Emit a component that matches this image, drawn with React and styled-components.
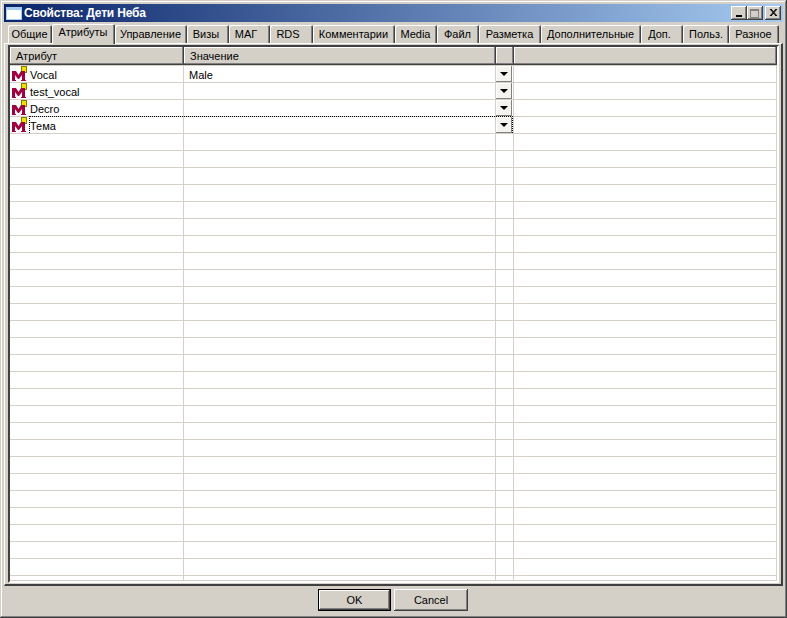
import styled, { createGlobalStyle } from "styled-components"

const Global = createGlobalStyle`
    html, body {
        margin: 0;
        padding: 0;
        background: #d4d0c8;
    }
    * {
        box-sizing: border-box;
    }
`

const Window = styled.div`
    width: 787px;
    height: 618px;
    background: #d4d0c8;
    padding: 4px 4px 2px 4px;
    display: flex;
    flex-direction: column;
    overflow: hidden;
    font-family: "Liberation Sans", Arial, sans-serif;
    font-size: 11px;
    color: #000;
    box-shadow: inset -1px -1px 0 #404040, inset 1px 1px 0 #d4d0c8, inset -2px -2px 0 #808080, inset 2px 2px 0 #fff;
`

const TitleBar = styled.div`
    height: 18px;
    flex: none;
    display: flex;
    align-items: center;
    padding: 0 2px;
    background: linear-gradient(to right, #0a246a, #a6caf0);
`

const TitleIcon = styled.div`
    width: 16px;
    height: 13px;
    background: #fff;
    border: 1px solid #a6caf0;
    border-top: 3px solid #a6caf0;
    margin-right: 2px;
`

const TitleText = styled.div`
    flex: 1;
    color: #fff;
    font-family: "Liberation Sans", sans-serif;
    font-size: 12px;
    font-weight: bold;
    letter-spacing: -0.2px;
    white-space: nowrap;
`

const CaptionButton = styled.div`
    width: 16px;
    height: 14px;
    margin-left: ${p => p.$gap || 0}px;
    background: #d4d0c8;
    box-shadow: inset -1px -1px 0 #404040, inset 1px 1px 0 #fff, inset -2px -2px 0 #808080;
    display: flex;
    align-items: center;
    justify-content: center;
`

const TabStrip = styled.div`
    height: 21px;
    flex: none;
    display: flex;
    align-items: flex-end;
    padding-left: 4px;
`

const Tab = styled.div`
    width: ${p => p.$w}px;
    height: ${p => (p.$active ? 20 : 18)}px;
    margin-bottom: ${p => (p.$active ? -1 : 0)}px;
    background: #d4d0c8;
    border-top-left-radius: 2px;
    border-top-right-radius: 2px;
    box-shadow: inset 1px 1px 0 #fff, inset -1px 0 0 #404040, inset -2px 0 0 #808080;
    text-align: center;
    padding-right: ${p => p.$shift ?? 1}px;
    line-height: ${p => (p.$active ? 17 : 19)}px;
    white-space: nowrap;
    position: relative;
    z-index: ${p => (p.$active ? 2 : 1)};
`

const Panel = styled.div`
    height: 543px;
    flex: none;
    border-left: 1px solid #fff;
    border-top: 1px solid #fff;
    border-right: 2px solid #404040;
    border-bottom: 2px solid #404040;
    padding: 1px 2px 1px 3px;
`

const Grid = styled.div`
    height: 538px;
    background: #fff;
    border-left: 2px solid #404040;
    border-top: 2px solid #404040;
    border-right: 2px solid #fff;
    border-bottom: 2px solid #fff;
    box-shadow: inset -1px -1px 0 #d4d0c8;
    overflow: hidden;
    position: relative;
`

const HeaderRow = styled.div`
    display: grid;
    grid-template-columns: 174px 312px 18px 1fr;
    height: 17px;
    margin-bottom: 1px;
`

const HeaderCell = styled.div`
    background: #d4d0c8;
    box-shadow: inset -1px -1px 0 #404040, inset -2px -2px 0 #808080, inset 1px 1px 0 #fff;
    padding-left: 6px;
    line-height: 18px;
    white-space: nowrap;
`

const Row = styled.div`
    display: grid;
    grid-template-columns: 174px 312px 18px 1fr;
    height: 17px;
    border-top: 1px solid #d4d0c8;
`

const Cell = styled.div`
    border-right: 1px solid #d4d0c8;
    display: flex;
    align-items: center;
    padding-left: ${p => p.$pad || 0}px;
    white-space: nowrap;
    position: relative;
    min-width: 0;
`

const CellText = styled.span`
    position: relative;
    top: 1px;
    margin-left: ${p => p.$gap || 0}px;
`

const ArrowButton = styled.div`
    width: 16px;
    height: 16px;
    background: #f4f3f0;
    box-shadow: inset -1px -1px 0 #808080, inset 1px 1px 0 #fff;
    display: flex;
    align-items: center;
    justify-content: center;
`

const Arrow = styled.div`
    width: 0;
    height: 0;
    border-left: 4px solid transparent;
    border-right: 4px solid transparent;
    border-top: 4px solid #000;
`

const FocusLine = styled.div`
    position: absolute;
    left: 19px;
    top: 69px;
    width: 484px;
    height: 17px;
    border: 1px dotted #000;
    border-bottom: none;
    pointer-events: none;
`

const ButtonBar = styled.div`
    flex: 1;
    display: flex;
    justify-content: center;
    align-items: flex-start;
    gap: 3px;
    padding: 3px 1px 0 0;
`

const DialogButton = styled.div`
    width: ${p => (p.$default ? 73 : 74)}px;
    height: 22px;
    background: #d4d0c8;
    text-align: center;
    line-height: 22px;
    box-shadow: ${p => p.$default
        ? "inset 0 0 0 1px #000, inset -2px -2px 0 #404040, inset 2px 2px 0 #fff, inset -3px -3px 0 #808080"
        : "inset -1px -1px 0 #404040, inset 1px 1px 0 #fff, inset -2px -2px 0 #808080"};
`

const MIcon = () => (
    <svg width="18" height="16" viewBox="0 0 18 16" style={{ flex: "none" }}>
        <rect x="10.5" y="0.5" width="5" height="6" fill="#f0e000" stroke="#808000" />
        <path d="M1 5h4l2.5 4L10 5h4v9h1v1h-5v-1h1V9l-3 4H7L4 9v5h1v1H1v-1h0z" fill="#a00040" />
    </svg>
)

const tabs = [
    ["Общие", 44], ["Атрибуты", 63], ["Управление", 72], ["Визы", 42, 4], ["МАГ", 41, 7], ["RDS", 43, 7],
    ["Комментарии", 82], ["Media", 42], ["Файл", 42], ["Разметка", 62], ["Дополнительные", 100],
    ["Доп.", 42, 5], ["Польз.", 46, 0], ["Разное", 50],
]

const attrs = ["Vocal", "test_vocal", "Decro", "Тема"]
const emptyRows = Array.from({ length: 28 })

const App = () => {
    return (
        <Window>
            <Global />
            <TitleBar>
                <TitleIcon />
                <TitleText>Свойства: Дети Неба</TitleText>
                <CaptionButton>
                    <svg width="8" height="8"><rect x="1" y="6" width="6" height="2" fill="#000" /></svg>
                </CaptionButton>
                <CaptionButton>
                    <svg width="10" height="9"><rect x="0.5" y="0.5" width="8" height="8" fill="none" stroke="#808080" /><rect x="0" y="0" width="9" height="2" fill="#808080" /></svg>
                </CaptionButton>
                <CaptionButton $gap={2}>
                    <svg width="9" height="8"><path d="M1 0l6 7M2 0l6 7M7 0L1 7M8 0L2 7" stroke="#000" fill="none" /></svg>
                </CaptionButton>
            </TitleBar>
            <TabStrip>
                {tabs.map(([label, w, shift]) => (
                    <Tab key={label} $w={w} $shift={shift} $active={label === "Атрибуты"}>{label}</Tab>
                ))}
            </TabStrip>
            <Panel>
                <Grid>
                    <HeaderRow>
                        <HeaderCell>Атрибут</HeaderCell>
                        <HeaderCell>Значение</HeaderCell>
                        <HeaderCell />
                        <HeaderCell />
                    </HeaderRow>
                    {attrs.map((name, i) => (
                        <Row key={name}>
                            <Cell $pad={1}><MIcon /><CellText $gap={1}>{name}</CellText></Cell>
                            <Cell $pad={5}>{i === 0 ? <CellText>Male</CellText> : null}</Cell>
                            <Cell><ArrowButton><Arrow /></ArrowButton></Cell>
                            <Cell />
                        </Row>
                    ))}
                    {emptyRows.map((_, i) => (
                        <Row key={i}>
                            <Cell />
                            <Cell />
                            <Cell />
                            <Cell />
                        </Row>
                    ))}
                    <FocusLine />
                </Grid>
            </Panel>
            <ButtonBar>
                <DialogButton $default>OK</DialogButton>
                <DialogButton>Cancel</DialogButton>
            </ButtonBar>
        </Window>
    )
}

export default App
